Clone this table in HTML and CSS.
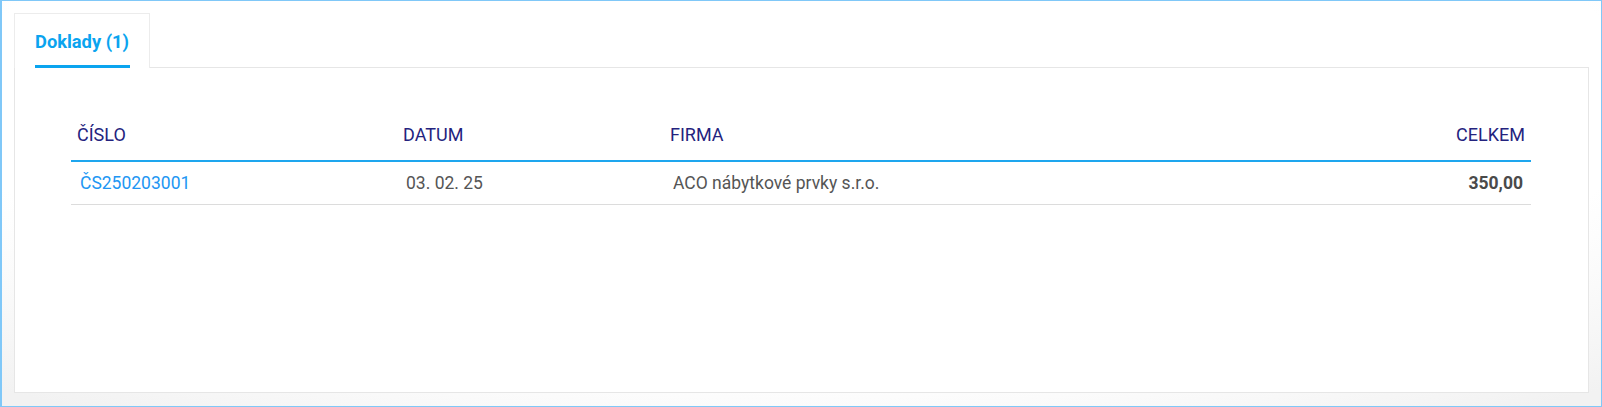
FILE: index.html
```html
<!DOCTYPE html>
<html lang="cs">
<head>
<meta charset="utf-8">
<link rel="stylesheet" href="styles.css">
</head>
<body>
<div class="frame">
  <div class="tabs">
    <div class="tab active"><span class="tab-label">Doklady (1)</span></div>
  </div>
  <div class="card">
    <table class="docs">
      <colgroup>
        <col class="c1"><col class="c2"><col class="c3"><col class="c4">
      </colgroup>
      <thead>
        <tr>
          <th>ČÍSLO</th>
          <th>DATUM</th>
          <th>FIRMA</th>
          <th class="num">CELKEM</th>
        </tr>
      </thead>
      <tbody>
        <tr>
          <td><a class="link" href="#">ČS250203001</a></td>
          <td>03. 02. 25</td>
          <td>ACO nábytkové prvky s.r.o.</td>
          <td class="num strong">350,00</td>
        </tr>
      </tbody>
    </table>
  </div>
</div>
</body>
</html>
```

FILE: styles.css
```css
html, body {
  margin: 0;
  padding: 0;
}
body {
  font-family: Roboto, "Liberation Sans", Arial, sans-serif;
  background: #fff;
}
.frame {
  box-sizing: border-box;
  width: 1602px;
  height: 407px;
  border: 1px solid #80c8f8;
  border-left-width: 2px;
  background: radial-gradient(ellipse 75% 95% at 50% 25%, #ffffff 70%, #f2f2f2 100%);
  padding: 12px 12px 13px 12px;
  display: flex;
  flex-direction: column;
}
.tabs {
  display: flex;
  position: relative;
  z-index: 1;
  margin-bottom: -1px;
}
.tab {
  box-sizing: border-box;
  height: 55px;
  width: 136px;
  background: #fff;
  border: 1px solid #ececec;
  border-bottom: none;
  padding: 0 0 0 20px;
  display: flex;
  flex-direction: column;
  justify-content: flex-end;
}
.tab-label {
  display: inline-block;
  width: 95px;
  color: #0aa4ef;
  font-weight: 700;
  font-size: 18.3px;
  line-height: 20px;
  padding-bottom: 13px;
  border-bottom: 3px solid #0aa4ef;
  white-space: nowrap;
}
.card {
  flex: 1;
  background: #fff;
  border: 1px solid #e6e6e6;
  padding: 48px 56px 0 56px;
}
.docs {
  width: 1460px;
  border-collapse: collapse;
  table-layout: fixed;
}
.c1 { width: 326px; }
.c2 { width: 267px; }
.c3 { width: auto; }
.c4 { width: 200px; }
.docs th {
  text-align: left;
  font-weight: 400;
  font-size: 18px;
  color: #24237e;
  padding: 8px 6px 14px 6px;
  line-height: 22px;
  border-bottom: 2px solid #1ea6ee;
}
.docs td {
  font-size: 17.5px;
  color: #555;
  padding: 10px 6px 10px 9px;
  line-height: 22px;
  border-bottom: 1px solid #dcdcdc;
}
.docs .num {
  text-align: right;
  padding-right: 6px;
}
.docs .strong {
  font-weight: 700;
  color: #4a4a4a;
  padding-right: 8px;
}
.link {
  color: #2196f3;
  text-decoration: none;
  font-size: 17.5px;
}
```
